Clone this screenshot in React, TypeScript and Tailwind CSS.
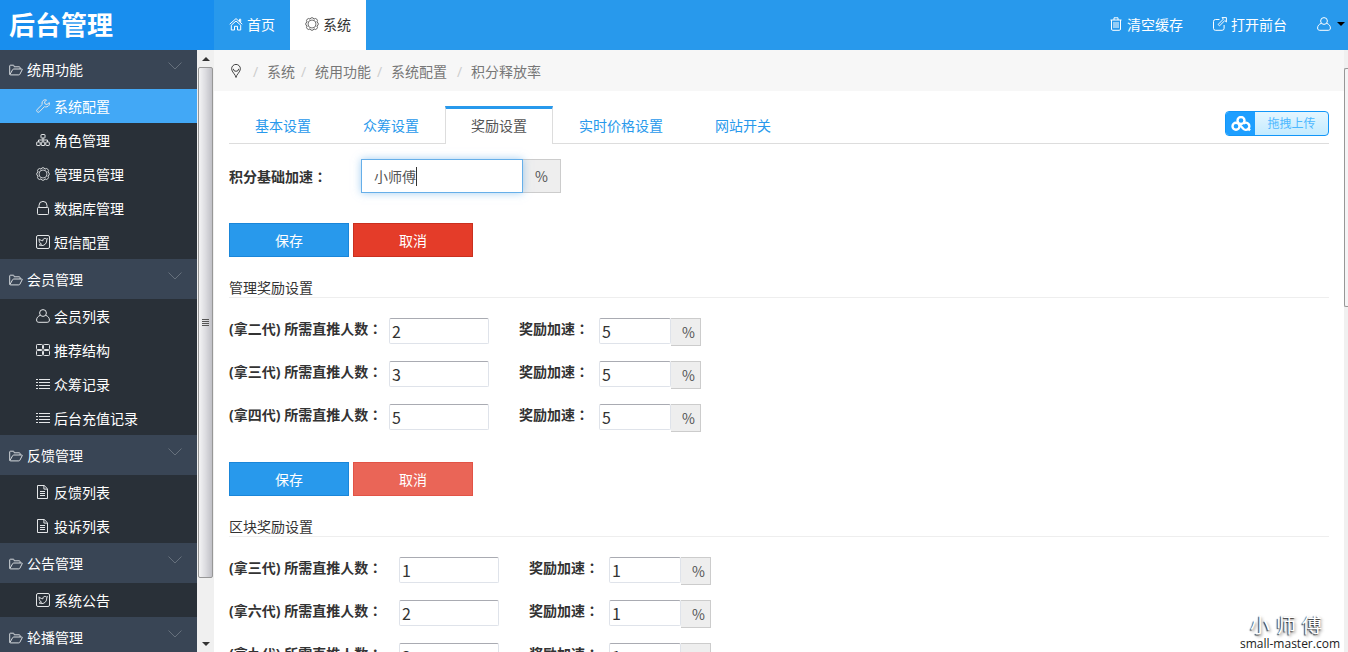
import type { ReactNode } from "react";
import clsx from "clsx";

const iconPaths = {
  home: (
    <>
      <path d="M.7 7.2 7 1.600l6.300 5.600" />
      <path d="M2.300 8.200 7 4l4.700 4.200v4.800H8.500V9.300h-3V13H2.300z" />
      <path d="M10.500 4.200V2.200h1.200v3" />
    </>
  ),
  gear: (
    <>
      <circle cx="7" cy="7" r="4" strokeWidth=".8" />
      <path
        strokeWidth=".9"
        d="M5.100 2.200a1.950 1.950 0 0 1 3.800 0 1.950 1.950 0 0 1 2.900 2.900 1.950 1.950 0 0 1 0 3.800 1.950 1.950 0 0 1-2.900 2.900 1.950 1.950 0 0 1-3.800 0 1.950 1.950 0 0 1-2.900-2.900 1.950 1.950 0 0 1 0-3.800 1.950 1.950 0 0 1 2.900-2.900z"
      />
    </>
  ),
  folder: (
    <>
      <path d="M.7 11.500V3q0-.8.8-.8h2.800q.8 0 .8.8v.8h5.200q.8 0 .8.8V6" />
      <path d="M.8 11.800 3.600 6.700q.4-.7 1.200-.7h8q.8 0 .4.700l-2.300 4.500q-.3.700-1.100.7H1.200" />
    </>
  ),
  wrench: (
    <>
      <path d="m6.200 5.500-5 4.900a1.500 1.500 0 0 0 0 2.300 1.500 1.500 0 0 0 2.300 0l4.900-5c1.700.6 3.600.1 4.500-1.300.6-.9.7-1.900.4-2.800L11 5.500 9 4.900 8.500 3l2-2C8.900.4 7.200 1 6.400 2.500c-.5 1-.5 2-.2 3z" />
      <path d="M2.200 11.600h.3" />
    </>
  ),
  sitemap: (
    <>
      <rect x="5" y="1.500" width="4" height="3.500" rx=".5" />
      <rect x=".7" y="9" width="3.500" height="3.500" rx=".5" />
      <rect x="5.250" y="9" width="3.500" height="3.500" rx=".5" />
      <rect x="9.800" y="9" width="3.500" height="3.500" rx=".5" />
      <path d="M7 5v4M2.500 9V7h9v2" />
    </>
  ),
  lock: (
    <>
      <rect x="1.500" y="6.500" width="11" height="7" rx=".8" />
      <path d="M3 6.500V4.400a4 4 0 0 1 8 0v2.100" />
    </>
  ),
  twitter: (
    <>
      <rect x=".5" y=".5" width="13" height="13" rx="1.500" />
      <path d="M3 3.800c1 1.200 2.300 1.900 3.900 2-.2-1.600 1-2.500 2.100-2.400.6 0 1 .2 1.400.6l1.100-.4-.7 1.200c.2 3.200-2 5.800-4.900 5.800-1 0-1.900-.2-2.700-.7 1 0 1.700-.2 2.400-.7-.8-.2-1.400-.6-1.600-1.400L3.300 6.500z" />
    </>
  ),
  user: (
    <>
      <circle cx="7" cy="4" r="3.400" />
      <path d="M4.300 6.300C2 7.200.6 8.800.6 11c0 1.600.8 2.300 2.200 2.300h8.400c1.400 0 2.200-.7 2.200-2.300 0-2.200-1.400-3.800-3.700-4.700" />
    </>
  ),
  grid: (
    <>
      <rect x=".5" y="1.500" width="6" height="5" rx=".8" />
      <rect x="7.500" y="1.500" width="6" height="5" rx=".8" />
      <rect x=".5" y="7.500" width="6" height="5" rx=".8" />
      <rect x="7.500" y="7.500" width="6" height="5" rx=".8" />
    </>
  ),
  list: (
    <path d="M0 2.500h2M3 2.500h11M0 5.500h2M3 5.500h11M0 8.500h2M3 8.500h11M0 11.500h2M3 11.500h11" />
  ),
  file: (
    <>
      <path d="M1.500.5h6.700l3.300 3.300v9.700h-10z" />
      <path d="M7.900.5v3.600h3.600M4 6.500h5M4 8.500h5M4 10.500h5" />
    </>
  ),
  trash: (
    <>
      <path d="M1.500 3h11M5 3V.8h4V3M2.500 3v9q0 1.300 1.300 1.300h6.400q1.300 0 1.300-1.300V3" />
      <path d="M5 5v6M7 5v6M9 5v6" />
    </>
  ),
  external: (
    <>
      <path d="M6.500 2.500h-4Q.5 2.500.5 4.500v6.800q0 2 2 2h6.600q2 0 2-2V8" />
      <path d="M9 .6h4.400V5L11.800 3.500 6.500 8.900 5.100 7.500l5.300-5.400z" />
    </>
  ),
  pin: (
    <>
      <path d="M7 13.500C6.700 10.500 2.600 8 2.600 4.800a4.400 4.400 0 0 1 8.800 0C11.400 8 7.300 10.500 7 13.500z" />
      <path d="M4.300 4.800a2.700 2.500 0 0 0 5.400 0" />
    </>
  ),
};

type IconName = keyof typeof iconPaths;

const Icon = ({ name, className }: { name: IconName; className?: string }) => (
  <svg
    viewBox="0 0 14 14"
    className={clsx("size-3.5 shrink-0", className)}
    fill="none"
    stroke="currentColor"
    strokeLinejoin="round"
    aria-hidden="true"
  >
    {iconPaths[name]}
  </svg>
);

type MenuItem = { icon: IconName; label: string; active?: boolean };

const menu: { title: string; items: MenuItem[] }[] = [
  {
    title: "统用功能",
    items: [
      { icon: "wrench", label: "系统配置", active: true },
      { icon: "sitemap", label: "角色管理" },
      { icon: "gear", label: "管理员管理" },
      { icon: "lock", label: "数据库管理" },
      { icon: "twitter", label: "短信配置" },
    ],
  },
  {
    title: "会员管理",
    items: [
      { icon: "user", label: "会员列表" },
      { icon: "grid", label: "推荐结构" },
      { icon: "list", label: "众筹记录" },
      { icon: "list", label: "后台充值记录" },
    ],
  },
  {
    title: "反馈管理",
    items: [
      { icon: "file", label: "反馈列表" },
      { icon: "file", label: "投诉列表" },
    ],
  },
  { title: "公告管理", items: [{ icon: "twitter", label: "系统公告" }] },
  { title: "轮播管理", items: [] },
];

const crumbs = ["系统", "统用功能", "系统配置", "积分释放率"];

const tabs = ["基本设置", "众筹设置", "奖励设置", "实时价格设置", "网站开关"];

const manageRows = [
  { id: "m2", level: "二", people: "2", rate: "5" },
  { id: "m3", level: "三", people: "3", rate: "5" },
  { id: "m4", level: "四", people: "5", rate: "5" },
];

const blockRows = [
  { id: "b3", level: "三", people: "1", rate: "1" },
  { id: "b6", level: "六", people: "2", rate: "1" },
  { id: "b9", level: "九", people: "3", rate: "1" },
];

// full-width colon, centred in its cell
const Colon = () => <span className="font-['Noto_Sans_CJK_TC',sans-serif]">：</span>;

const Header = () => (
  <header className="flex h-[50px] shrink-0 bg-[#2899ec] text-white">
    <h1 className="flex w-[214px] shrink-0 items-center bg-[#188eee] pt-0.5 pl-[9px] text-[26px] font-bold">
      后台管理
    </h1>
    <nav className="flex">
      <a href="#home" className="flex items-center gap-1 px-[15px]">
        <Icon name="home" className="mb-0.5" />
        首页
      </a>
      <a href="#system" className="flex items-center gap-1 bg-white px-[15px] text-[#333]">
        <Icon name="gear" className="mb-0.5 text-[#555]" />
        系统
      </a>
    </nav>
    <div className="ml-auto flex">
      <a href="#cache" className="flex items-center gap-1 px-[15px]">
        <Icon name="trash" className="mb-0.5" />
        清空缓存
      </a>
      <a href="#front" className="flex items-center gap-1 px-[15px]">
        <Icon name="external" className="mb-0.5" />
        打开前台
      </a>
      <button type="button" aria-label="账户" className="flex items-center gap-1.5 pr-[3px] pl-[15px]">
        <Icon name="user" className="mb-0.5" />
        <span className="mb-0.5 border-x-4 border-t-4 border-x-transparent border-t-black" />
      </button>
    </div>
  </header>
);

const Sidebar = () => (
  <aside className="w-[197px] shrink-0 overflow-hidden bg-[#293038] text-white">
    {menu.map((group) => (
      <section key={group.title} className="group">
        <button
          type="button"
          className="flex h-10 w-full items-center gap-1 bg-[#394555] pt-px pr-[15px] pl-[9px] group-first:h-[39px]"
        >
          <Icon name="folder" className="text-[#d5d9dd]" />
          {group.title}
          <svg viewBox="0 0 14 14" className="mb-2 ml-auto size-3.5" fill="none" stroke="#66707c" aria-hidden="true">
            <path d="M.5 3.500 7 10l6.500-6.500" />
          </svg>
        </button>
        <ul>
          {group.items.map((item) => (
            <li key={item.label}>
              <a
                href="#menu"
                className={clsx("flex h-[34px] items-center gap-1 pt-0.5 pl-9", item.active && "bg-[#42a8f6]")}
              >
                <Icon name={item.icon} className="mb-0.5 text-[#e4e6e8]" />
                {item.label}
              </a>
            </li>
          ))}
        </ul>
      </section>
    ))}
  </aside>
);

const SideScrollbar = () => (
  <div className="flex w-[17px] shrink-0 flex-col items-center bg-[#f0f0f0]" aria-hidden="true">
    <div className="flex h-[17px] items-center">
      <span className="border-x-4 border-b-4 border-x-transparent border-b-[#333]" />
    </div>
    <div className="flex w-full grow flex-col px-px">
      <div className="flex h-[90%] flex-col items-center justify-center gap-px rounded-xs border border-[#979797] bg-linear-to-r from-[#f4f4f5] via-[#dcdce0] to-[#c0c0c6]">
        <span className="h-px w-[7px] bg-[#555]" />
        <span className="h-px w-[7px] bg-[#555]" />
        <span className="h-px w-[7px] bg-[#555]" />
        <span className="h-px w-[7px] bg-[#555]" />
      </div>
    </div>
    <div className="flex h-[17px] items-center">
      <span className="border-x-4 border-t-4 border-x-transparent border-t-[#333]" />
    </div>
  </div>
);

const Breadcrumb = () => (
  <nav aria-label="当前位置" className="flex h-[41px] items-center bg-[#f7f7f7] px-[15px] pt-0.5 text-[#777]">
    <Icon name="pin" className="mr-1 mb-0.5 text-[#444]" />
    {crumbs.map((crumb) => (
      <span key={crumb} className="flex last:pl-1">
        <span className="w-5 pl-1.5 text-[#ccc]">/</span>
        <a href="#crumb">{crumb}</a>
      </span>
    ))}
  </nav>
);

const Tabs = () => (
  <div className="mt-[15px] flex items-start justify-between bg-[linear-gradient(#ddd,#ddd)] bg-size-[100%_1px] bg-bottom bg-no-repeat">
    <div role="tablist" className="flex">
      {tabs.map((tab) => {
        const active = tab === "奖励设置";
        return (
          <button
            key={tab}
            type="button"
            role="tab"
            aria-selected={active}
            className={clsx(
              "h-[38px] border-x border-t-3 px-[25px] pb-0.5",
              active
                ? "border-x-[#ddd] border-t-[#2899ec] bg-white text-[#555]"
                : "border-transparent text-[#2899ec]"
            )}
          >
            {tab}
          </button>
        );
      })}
    </div>
    <button
      type="button"
      className="mt-[5px] flex h-[25px] w-[104px] overflow-hidden rounded border border-[#1296f8] bg-linear-to-b from-[#e4f6ff] to-[#c4ebff] text-xs text-[#4db8ff]"
    >
      <span className="flex h-full w-[29px] items-center justify-center bg-[#1e9fff]">
        <svg viewBox="0 0 20 16" className="h-4 w-5" fill="none" stroke="#fff" strokeWidth="2.400" aria-hidden="true">
          <circle cx="10" cy="4.500" r="3.500" />
          <circle cx="5" cy="10.200" r="3.500" />
          <path d="M7.500 7.500 12.300 12.700a3.500 3.500 0 1 0 .2-5" />
          <path d="M17 12.300 19 14.300" />
        </svg>
      </span>
      <span className="flex h-full grow items-center justify-center pt-px">拖拽上传</span>
    </button>
  </div>
);

const Actions = ({ faded }: { faded?: boolean }) => (
  <div className="mt-[30px] flex gap-1 text-white">
    <button type="button" className="h-[34px] w-[120px] border border-[#1a86d9] bg-[#2899ec] pt-px">
      保存
    </button>
    <button
      type="button"
      className={clsx(
        "h-[34px] w-[120px] border pt-px",
        faded ? "border-[#e25346] bg-[#ea6557]" : "border-[#c9301f] bg-[#e43c29]"
      )}
    >
      取消
    </button>
  </div>
);

const inputStyle =
  "h-[26px] rounded-xs border border-[#dfe3ea] border-t-[#a9abb2] bg-white px-0.5 font-['Noto_Sans_CJK_SC',sans-serif] text-base text-[#333] outline-none";

type RewardRow = { id: string; level: string; people: string; rate: string };

const RewardSection = ({ title, rows, wide }: { title: string; rows: RewardRow[]; wide?: boolean }) => (
  <section>
    <h2 className="mt-5 h-[21px] border-b border-[#eee] leading-[22px] text-[#333]">{title}</h2>
    <div className="mt-5 flex flex-col gap-[15px]">
      {rows.map((row) => (
        <div key={row.id} className="flex h-7 items-start leading-5">
          <label
            htmlFor={row.id + "-people"}
            className={clsx("shrink-0 font-bold whitespace-nowrap text-[#333]", wide ? "w-[170px]" : "w-[160px]")}
          >
            (拿{row.level}代) 所需直推人数
            <Colon />
          </label>
          <input id={row.id + "-people"} defaultValue={row.people} className={clsx(inputStyle, "mr-[30px] w-[100px]")} />
          <label htmlFor={row.id + "-rate"} className="w-20 shrink-0 font-bold text-[#333]">
            奖励加速
            <Colon />
          </label>
          <input id={row.id + "-rate"} defaultValue={row.rate} className={clsx(inputStyle, "w-[72px]")} />
          <span className="h-7 w-[30px] border border-l-0 border-[#ccc] bg-[#eee] pr-[5px] text-right font-['Noto_Sans_CJK_SC',sans-serif] leading-[26px] text-[#555]">
            %
          </span>
        </div>
      ))}
    </div>
  </section>
);

const Field = ({ children }: { children: ReactNode }) => (
  <div className="mt-[15px] flex h-[34px] items-center">{children}</div>
);

const App = () => {
  return (
    <div className="relative flex h-screen flex-col overflow-hidden bg-white font-['Open_Sans','Noto_Sans_CJK_SC',sans-serif] text-sm">
      <Header />
      <div className="flex min-h-0 grow">
        <Sidebar />
        <SideScrollbar />
        <main className="min-w-0 grow overflow-hidden">
          <Breadcrumb />
          <div className="px-[15px]">
            <Tabs />
            <Field>
              <label htmlFor="base-rate" className="w-[132px] font-bold text-[#333]">
                积分基础加速
                <Colon />
              </label>
              <div className="relative z-10">
                <input
                  id="base-rate"
                  defaultValue="小师傅"
                  className="h-[34px] w-[162px] border border-[#66afe9] bg-white px-3 text-[#555] shadow-[0_0_8px_rgba(102,175,233,0.6)] outline-none"
                />
                <span className="absolute top-2 left-[55px] h-[19px] w-px bg-[#333]" />
              </div>
              <span className="flex h-[34px] w-[38px] items-center justify-center border border-l-0 border-[#ccc] bg-[#eee] font-['Noto_Sans_CJK_SC',sans-serif] text-[#555]">
                %
              </span>
            </Field>
            <Actions />
            <RewardSection title="管理奖励设置" rows={manageRows} />
            <Actions faded />
            <RewardSection title="区块奖励设置" rows={blockRows} wide />
          </div>
        </main>
        <div className="w-1 shrink-0 bg-[#f0f0f0] pt-[18px]" aria-hidden="true">
          <div className="h-[41%] rounded-l-xs border border-r-0 border-[#979797] bg-[#f4f4f5]" />
        </div>
      </div>
      <div className="absolute right-2 bottom-0 flex flex-col items-center text-xs leading-4 text-[#222]">
        <div className="mr-2 flex gap-1.5 text-xl leading-5 text-white [text-shadow:-1px_1px_1px_#333,1px_2px_3px_#999]">
          <span>小</span>
          <span>师</span>
          <span>傅</span>
        </div>
        <span>small-master.com</span>
      </div>
    </div>
  );
};

export default App;
